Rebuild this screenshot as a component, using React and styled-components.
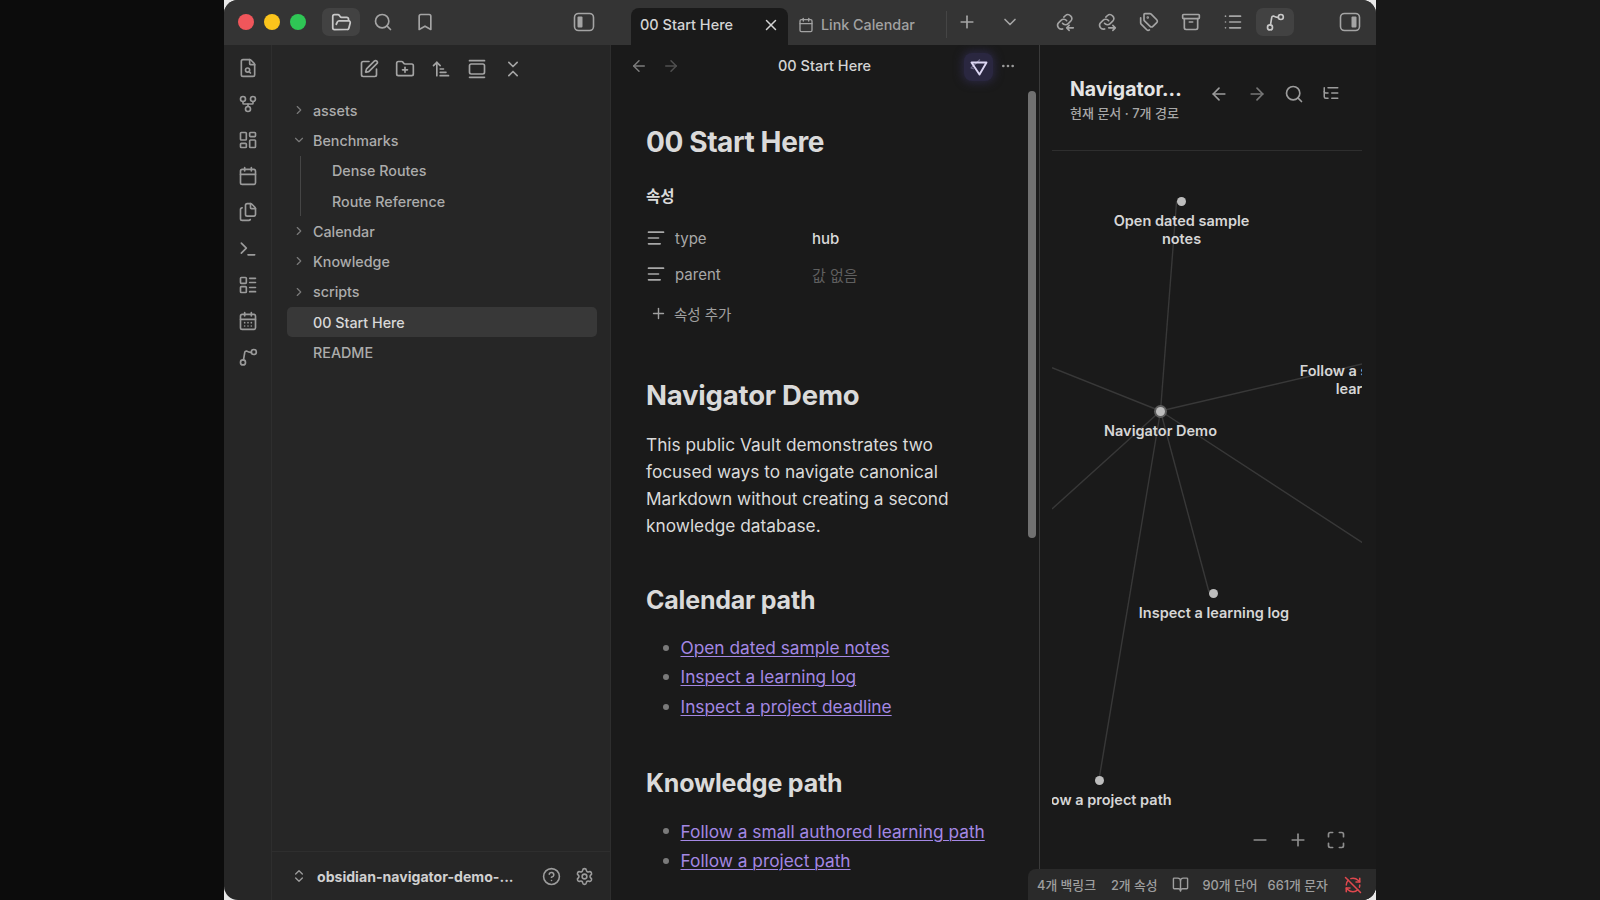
import React from "react";
import styled, { createGlobalStyle } from "styled-components";
import {
  FolderOpen, Search, Bookmark, X, Calendar, Plus, ChevronDown, ChevronRight, Tags, Archive, List,
  FileSearch, GitFork, LayoutDashboard, Files, Terminal, LayoutList, CalendarDays,
  SquarePen, FolderPlus, ArrowUpNarrowWide, GalleryVertical, ChevronsDownUp, ChevronsUpDown,
  CircleHelp, Settings, ArrowLeft, ArrowRight, MoreHorizontal, AlignLeft, ListTree, Minus,
  Maximize, BookOpen, RefreshCwOff
} from "lucide-react";

const GlobalStyle = createGlobalStyle`
  html, body { margin: 0; padding: 0; height: 100%; background: #101010; }
  body { font-family: Inter, "Noto Sans CJK KR", sans-serif; overflow: hidden; -webkit-font-smoothing: antialiased; }
  #root { height: 100%; }
`;

const Page = styled.div`
  height: 900px;
  display: flex;
  justify-content: center;
  background: linear-gradient(90deg, #0c0c0c 0, #0c0c0c 224px, #181818 1376px);
`;
const Frame = styled.div`
  width: 1152px;
  height: 900px;
  background: #e8e8e8;
`;
const Shell = styled.div`
  position: relative;
  height: 100%;
  display: flex;
  flex-direction: column;
  border-radius: 14px;
  overflow: hidden;
  background: #262626;
`;

/* title bar */
const TitleBar = styled.header`
  height: 45px;
  flex: none;
  display: flex;
  background: #343434;
  color: #a8a8a8;
`;
const TitleLeft = styled.div`
  width: 407px;
  flex: none;
  display: flex;
  align-items: flex-start;
  padding: 8px 28px 0 14px;
  box-sizing: border-box;
`;
const Lights = styled.div`
  display: flex;
  gap: 10px;
  margin: 6px 16px 0 0;
`;
const Light = styled.span`
  width: 16px;
  height: 16px;
  border-radius: 50%;
  background: ${(p) => p.$color};
`;
const TopButton = styled.button`
  width: 38px;
  height: 28px;
  flex: none;
  padding: 0;
  border: 0;
  border-radius: 7px;
  display: flex;
  align-items: center;
  justify-content: center;
  color: ${(p) => (p.$active ? "#c8c8c8" : "#a4a4a4")};
  background: ${(p) => (p.$active ? "#424242" : "transparent")};
`;
const TopGroup = styled.div`
  display: flex;
  gap: 4px;
  margin-right: auto;
`;
const Tab = styled.div`
  width: 157px;
  flex: none;
  margin-top: 8px;
  padding: 0 8px 4px 9px;
  box-sizing: border-box;
  display: flex;
  align-items: center;
  justify-content: space-between;
  border-radius: 8px 8px 0 0;
  background: #1a1a1a;
  color: #d4d4d4;
  font-size: 14.5px;
  font-weight: 500;
`;
const SecondTab = styled.div`
  width: 159px;
  flex: none;
  margin-top: 11px;
  padding-left: 10px;
  box-sizing: border-box;
  display: flex;
  align-items: center;
  gap: 7px;
  border-right: 1px solid #454545;
  height: 27px;
  color: #a2a2a2;
  font-size: 14.3px;
  font-weight: 500;
`;
const TabActions = styled.div`
  flex: 1;
  display: flex;
  padding: 8px 7px 0 1px;
  align-items: flex-start;
`;
const ActionGroup = styled.div`
  display: flex;
  gap: 4px;
  margin: 0 auto 0 17px;
`;
const Wide = styled.div`
  display: flex;
  gap: 5px;
`;

/* body */
const Body = styled.div`
  flex: 1;
  min-height: 0;
  display: flex;
`;
const Ribbon = styled.nav`
  width: 48px;
  flex: none;
  padding-top: 5px;
  box-sizing: border-box;
  display: flex;
  flex-direction: column;
  align-items: center;
  border-right: 1px solid #2e2e2e;
  color: #9a9a9a;
`;
const RibbonItem = styled.div`
  height: 36.1px;
  flex: none;
  display: flex;
  align-items: center;
`;
const Sidebar = styled.aside`
  width: 338px;
  flex: none;
  display: flex;
  flex-direction: column;
  box-sizing: border-box;
`;
const SideTools = styled.div`
  height: 50px;
  flex: none;
  padding-bottom: 2px;
  box-sizing: border-box;
  display: flex;
  justify-content: center;
  align-items: center;
  gap: 16px;
  color: #a4a4a4;
`;
const Tree = styled.div`
  flex: 1;
  padding: 0 13px 0 15px;
`;
const Row = styled.div`
  height: 30.3px;
  display: flex;
  align-items: center;
  padding-left: ${(p) => (p.$nested ? "45px" : "26px")};
  position: relative;
  color: ${(p) => (p.$active ? "#d8d8d8" : "#acacac")};
  font-size: 14.3px;
  font-weight: 500;
  border-radius: 5px;
  background: ${(p) => (p.$active ? "#383838" : "transparent")};
`;
const Caret = styled.span`
  position: absolute;
  left: 5px;
  top: 8px;
  color: #7a7a7a;
  display: flex;
`;
const Guide = styled.span`
  position: absolute;
  left: 13px;
  top: 0;
  bottom: 0;
  width: 1px;
  background: #454545;
`;
const SideFooter = styled.footer`
  height: 48px;
  flex: none;
  display: flex;
  align-items: center;
  padding: 0 16px 0 19px;
  border-top: 1px solid #2e2e2e;
  color: #9c9c9c;
`;
const VaultName = styled.span`
  margin-left: 10px;
  margin-right: auto;
  color: #d0d0d0;
  font-size: 14.1px;
  font-weight: 700;
`;
const FooterIcons = styled.div`
  display: flex;
  gap: 14px;
`;

/* note */
const Main = styled.main`
  width: 429px;
  flex: none;
  position: relative;
  overflow: hidden;
  background: #1a1a1a;
  border-left: 1px solid #2e2e2e;
  box-sizing: border-box;
`;
const ViewHeader = styled.div`
  height: 42px;
  display: flex;
  align-items: center;
  padding: 0 21px 0 19px;
  color: #d4d4d4;
  font-size: 14.5px;
  font-weight: 500;
  position: relative;
`;
const NavArrows = styled.div`
  display: flex;
  gap: 14px;
  color: #7c7c7c;
`;
const ViewTitle = styled.span`
  position: absolute;
  left: 167px;
  top: 12px;
`;
const FilterButton = styled.div`
  position: absolute;
  left: 353px;
  top: 8px;
  width: 29px;
  height: 28px;
  border-radius: 8px;
  display: flex;
  align-items: center;
  justify-content: center;
  background: #2a2740;
  box-shadow: 0 0 9px 2px #2a2740;
  color: #dcd6f2;
`;
const More = styled.span`
  position: absolute;
  left: 389px;
  top: 13px;
  color: #9a9a9a;
  display: flex;
`;
const Scrollbar = styled.div`
  position: absolute;
  left: 417px;
  top: 46px;
  width: 8px;
  height: 447px;
  border-radius: 4px;
  background: #707070;
`;
const Note = styled.article`
  padding: 37px 0 0 35px;
  color: #dadada;
`;
const Title = styled.h1`
  margin: 0;
  font-size: 28px;
  line-height: 36px;
  font-weight: 700;
  letter-spacing: -0.4px;
`;
const PropHeading = styled.div`
  margin-top: 25px;
  font-size: 15.5px;
  line-height: 24px;
  font-weight: 700;
`;
const Props = styled.div`
  margin-top: 11px;
  display: flex;
  flex-direction: column;
`;
const Prop = styled.div`
  height: 36px;
  display: grid;
  grid-template-columns: 29px 137px 1fr;
  align-items: center;
  color: #a8a8a8;
  font-size: 15px;
`;
const PropValue = styled.span`
  color: ${(p) => (p.$empty ? "#5f5f5f" : "#dadada")};
  font-weight: ${(p) => (p.$empty ? 400 : 500)};
`;
const AddProp = styled.div`
  margin: 3px 0 0 4px;
  height: 36px;
  display: flex;
  align-items: center;
  gap: 7px;
  color: #a0a0a0;
  font-size: 14.5px;
`;
const Heading = styled.h2`
  margin: ${(p) => p.$top} 0 0;
  font-size: ${(p) => p.$size};
  line-height: 34px;
  font-weight: 700;
  letter-spacing: -0.2px;
`;
const Para = styled.p`
  margin: 18.5px 0 0;
  width: 330px;
  font-size: 17.3px;
  line-height: 27px;
  color: #dadada;
`;
const Links = styled.ul`
  margin: 16px 0 0;
  padding: 0;
  list-style: none;
`;
const LinkItem = styled.li`
  height: 29.6px;
  display: flex;
  align-items: center;
  padding-left: 34.5px;
  position: relative;
  font-size: 17.3px;
  color: #a488e4;
  text-decoration: underline;
  text-underline-offset: 2px;
  text-decoration-thickness: 1px;
  &::before {
    content: "";
    position: absolute;
    left: 17px;
    top: 12px;
    width: 6px;
    height: 6px;
    border-radius: 50%;
    background: #7a7a7a;
  }
`;

/* graph panel */
const Panel = styled.section`
  flex: 1;
  min-width: 0;
  position: relative;
  background: #1a1a1a;
  border-left: 1px solid #3a3a3a;
  display: flex;
  flex-direction: column;
`;
const PanelHead = styled.div`
  margin: 0 14px 0 12px;
  height: 106px;
  flex: none;
  box-sizing: border-box;
  padding: 32px 0 0 18px;
  display: flex;
  border-bottom: 1px solid #2e2e2e;
`;
const PanelName = styled.div`
  color: #e4e4e4;
  font-size: 19.5px;
  line-height: 24px;
  font-weight: 700;
`;
const PanelSub = styled.div`
  margin-top: 4px;
  color: #a8a8a8;
  font-size: 13px;
  line-height: 16px;
  font-weight: 500;
`;
const PanelTools = styled.div`
  display: flex;
  gap: 17.5px;
  margin: 7px 0 0 27.5px;
  color: #9c9c9c;
`;
const Canvas = styled.div`
  position: relative;
  margin: 0 14px 0 12px;
  flex: 1;
  overflow: hidden;
`;
const Edges = styled.svg`
  position: absolute;
  left: 0;
  top: 0;
  width: 100%;
  height: 100%;
`;
const Node = styled.span`
  position: absolute;
  left: ${(p) => p.$x}px;
  top: ${(p) => p.$y}px;
  width: 9px;
  height: 9px;
  margin: -4.5px 0 0 -4.5px;
  border-radius: 50%;
  background: #bdbdbd;
  box-shadow: ${(p) => (p.$current ? "0 0 0 2px #5c5c5c" : "none")};
`;
const NodeLabel = styled.span`
  position: absolute;
  left: ${(p) => p.$x}px;
  top: ${(p) => p.$y}px;
  transform: translateX(-50%);
  width: max-content;
  max-width: ${(p) => p.$max || 190}px;
  text-align: center;
  color: #d6d6d6;
  font-size: 14.5px;
  line-height: 18.4px;
  font-weight: 600;
`;
const ZoomTools = styled.div`
  position: absolute;
  right: 16px;
  bottom: 50px;
  display: flex;
  gap: 18px;
  color: #8e8e8e;
`;
const StatusBar = styled.div`
  position: absolute;
  right: 0;
  bottom: 0;
  width: 348px;
  height: 31px;
  box-sizing: border-box;
  padding: 0 14px 0 9px;
  display: flex;
  align-items: center;
  border-radius: 8px 0 0 0;
  background: #2a2a2a;
  color: #9e9e9e;
  font-size: 12.8px;
  font-weight: 500;
`;
const Stat = styled.span`
  margin-right: ${(p) => p.$gap}px;
`;
const SyncIcon = styled.span`
  margin-left: auto;
  display: flex;
  color: #e0484e;
`;
const BookIcon = styled(BookOpen)`
  display: block;
`;

const PanelToggle = ({ right }) => (
  <svg width="22" height="20" viewBox="0 0 22 20" fill="none">
    <rect x="1.5" y="1.5" width="19" height="17" rx="4" stroke="currentColor" strokeWidth="1.6" />
    <rect x={right ? 12.5 : 4.5} y="4.5" width="5" height="11" rx="1" fill="currentColor" />
  </svg>
);

const GraphIcon = ({ size = 20 }) => (
  <svg width={size} height={size} viewBox="0 0 24 24" fill="none" stroke="currentColor" strokeWidth="2" strokeLinecap="round">
    <circle cx="6" cy="18.5" r="3" />
    <circle cx="19" cy="6" r="3" />
    <path d="M6.6 15.5 L8 7 Q8.4 4.4 10.6 5 Q13 6.6 16 6.4" />
  </svg>
);

const LinkArrow = ({ out }) => (
  <svg width="20" height="20" viewBox="0 0 24 24" fill="none" stroke="currentColor" strokeWidth="1.9" strokeLinecap="round" strokeLinejoin="round">
    <path d="M9 13.5a4.5 4.5 0 0 0 6.8.5l3-3a4.6 4.6 0 0 0-6.5-6.5l-1.7 1.7" />
    <path d="M14 10.5a4.5 4.5 0 0 0-6.8-.5l-3 3a4.6 4.6 0 0 0 5 7.3" />
    {out
      ? <path d="M14 19h8M19 16l3 3-3 3" />
      : <path d="M22 19h-8M17 16l-3 3 3 3" />}
  </svg>
);

const FilterIcon = () => (
  <svg width="20" height="20" viewBox="0 0 20 20" fill="none" strokeLinejoin="round">
    <path d="M11 2.5 2 11l3 1" stroke="#6f6a88" strokeWidth="1.2" />
    <path d="M2.5 5.5h15L10.5 17.5z" stroke="currentColor" strokeWidth="1.9" />
  </svg>
);

const ribbon = [FileSearch, GitFork, LayoutDashboard, Calendar, Files, Terminal, LayoutList, CalendarDays, GraphIcon];

// canvas starts at 1052,152 in the screen
const center = [108.5, 260];
const edges = [[0, 216.7], [0, 358], [311, 392], [340, 206], [124.6, 50], [157, 441], [47, 628.5]];

const Graph = () => (
  <Canvas>
    <Edges>
      {edges.map(([x, y]) => (
        <line key={x + "-" + y} x1={center[0]} y1={center[1]} x2={x} y2={y} stroke="#383838" strokeWidth="1.4" />
      ))}
    </Edges>
    <Node $x={129.5} $y={50} />
    <NodeLabel $x={129.5} $y={61} $max={150}>Open dated sample notes</NodeLabel>
    <Node $x={108.5} $y={260} $current />
    <NodeLabel $x={108.5} $y={271}>Navigator Demo</NodeLabel>
    <Node $x={161} $y={442} />
    <NodeLabel $x={162} $y={453}>Inspect a learning log</NodeLabel>
    <Node $x={47} $y={629.5} />
    <NodeLabel $x={47} $y={640}>Follow a project path</NodeLabel>
    <NodeLabel $x={330} $y={211}>Follow a small authored learning path</NodeLabel>
    <ZoomTools>
      <Minus size={20} />
      <Plus size={20} />
      <Maximize size={20} />
    </ZoomTools>
  </Canvas>
);

export default function App() {
  return (
    <Page>
      <GlobalStyle />
      <Frame>
        <Shell>
          <TitleBar>
            <TitleLeft>
              <Lights>
                <Light $color="#f0565b" />
                <Light $color="#fbc41c" />
                <Light $color="#2fc655" />
              </Lights>
              <TopGroup>
                <TopButton $active><FolderOpen size={21} /></TopButton>
                <TopButton><Search size={20} /></TopButton>
                <TopButton><Bookmark size={20} /></TopButton>
              </TopGroup>
              <TopButton><PanelToggle /></TopButton>
            </TitleLeft>
            <Tab>
              00 Start Here
              <X size={18} />
            </Tab>
            <SecondTab>
              <Calendar size={16} />
              Link Calendar
            </SecondTab>
            <TabActions>
              <Wide>
                <TopButton><Plus size={20} /></TopButton>
                <TopButton><ChevronDown size={20} /></TopButton>
              </Wide>
              <ActionGroup>
                <TopButton><LinkArrow /></TopButton>
                <TopButton><LinkArrow out /></TopButton>
                <TopButton><Tags size={20} /></TopButton>
                <TopButton><Archive size={20} /></TopButton>
                <TopButton><List size={20} /></TopButton>
                <TopButton $active><GraphIcon /></TopButton>
              </ActionGroup>
              <TopButton><PanelToggle right /></TopButton>
            </TabActions>
          </TitleBar>
          <Body>
            <Ribbon>
              {ribbon.map((Icon, i) => (
                <RibbonItem key={i}><Icon size={20} /></RibbonItem>
              ))}
            </Ribbon>
            <Sidebar>
              <SideTools>
                <SquarePen size={20} />
                <FolderPlus size={20} />
                <ArrowUpNarrowWide size={20} />
                <GalleryVertical size={20} />
                <ChevronsDownUp size={20} />
              </SideTools>
              <Tree>
                <Row><Caret><ChevronRight size={14} /></Caret>assets</Row>
                <Row><Caret><ChevronDown size={14} /></Caret>Benchmarks</Row>
                <Row $nested><Guide />Dense Routes</Row>
                <Row $nested><Guide />Route Reference</Row>
                <Row><Caret><ChevronRight size={14} /></Caret>Calendar</Row>
                <Row><Caret><ChevronRight size={14} /></Caret>Knowledge</Row>
                <Row><Caret><ChevronRight size={14} /></Caret>scripts</Row>
                <Row $active>00 Start Here</Row>
                <Row>README</Row>
              </Tree>
              <SideFooter>
                <ChevronsUpDown size={16} />
                <VaultName>obsidian-navigator-demo-...</VaultName>
                <FooterIcons>
                  <CircleHelp size={19} />
                  <Settings size={19} />
                </FooterIcons>
              </SideFooter>
            </Sidebar>
            <Main>
              <ViewHeader>
                <NavArrows>
                  <ArrowLeft size={18} />
                  <ArrowRight size={18} color="#505050" />
                </NavArrows>
                <ViewTitle>00 Start Here</ViewTitle>
                <FilterButton><FilterIcon /></FilterButton>
                <More><MoreHorizontal size={16} /></More>
              </ViewHeader>
              <Scrollbar />
              <Note>
                <Title>00 Start Here</Title>
                <PropHeading>속성</PropHeading>
                <Props>
                  <Prop>
                    <AlignLeft size={20} />
                    type
                    <PropValue>hub</PropValue>
                  </Prop>
                  <Prop>
                    <AlignLeft size={20} />
                    parent
                    <PropValue $empty>값 없음</PropValue>
                  </Prop>
                </Props>
                <AddProp><Plus size={17} />속성 추가</AddProp>
                <Heading $top="47px" $size="27.5px">Navigator Demo</Heading>
                <Para>
                  This public Vault demonstrates two focused ways to navigate canonical Markdown without creating a second knowledge database.
                </Para>
                <Heading $top="44px" $size="25px">Calendar path</Heading>
                <Links>
                  <LinkItem>Open dated sample notes</LinkItem>
                  <LinkItem>Inspect a learning log</LinkItem>
                  <LinkItem>Inspect a project deadline</LinkItem>
                </Links>
                <Heading $top="45px" $size="25px">Knowledge path</Heading>
                <Links>
                  <LinkItem>Follow a small authored learning path</LinkItem>
                  <LinkItem>Follow a project path</LinkItem>
                </Links>
              </Note>
            </Main>
            <Panel>
              <PanelHead>
                <div>
                  <PanelName>Navigator...</PanelName>
                  <PanelSub>현재 문서 · 7개 경로</PanelSub>
                </div>
                <PanelTools>
                  <ArrowLeft size={20} />
                  <ArrowRight size={20} color="#777" />
                  <Search size={20} />
                  <ListTree size={18} />
                </PanelTools>
              </PanelHead>
              <Graph />
            </Panel>
          </Body>
          <StatusBar>
            <Stat $gap={15}>4개 백링크</Stat>
            <Stat $gap={14}>2개 속성</Stat>
            <Stat $gap={14}><BookIcon size={17} /></Stat>
            <Stat $gap={10}>90개 단어</Stat>
            <Stat $gap={0}>661개 문자</Stat>
            <SyncIcon><RefreshCwOff size={18} /></SyncIcon>
          </StatusBar>
        </Shell>
      </Frame>
    </Page>
  );
}
